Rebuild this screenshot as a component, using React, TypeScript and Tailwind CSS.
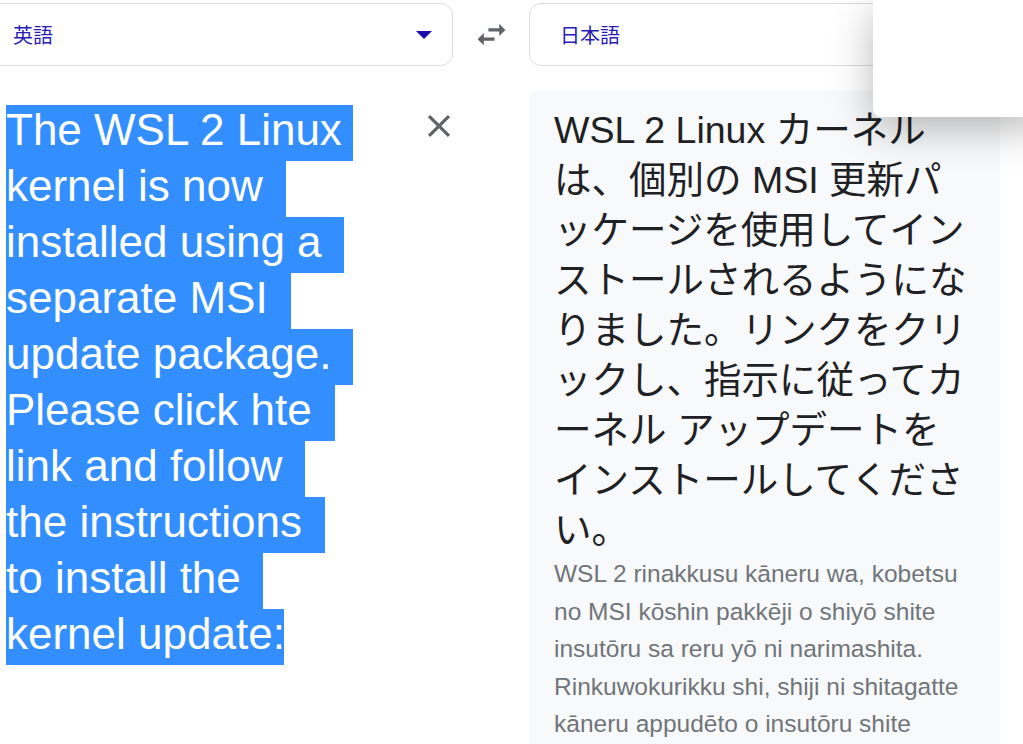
import React from "react";

const sourceLines = [
  { text: "The WSL 2 Linux", width: "w-[347px]" },
  { text: "kernel is now", width: "w-[280px]" },
  { text: "installed using a", width: "w-[338px]" },
  { text: "separate MSI", width: "w-[285px]" },
  { text: "update package.", width: "w-[347px]" },
  { text: "Please click hte", width: "w-[329px]" },
  { text: "link and follow", width: "w-[299px]" },
  { text: "the instructions", width: "w-[319px]" },
  { text: "to install the", width: "w-[257px]" },
  { text: "kernel update:", width: "w-[278px]" },
];

const translatedLines = [
  "WSL 2 Linux カーネル",
  "は、個別の MSI 更新パ",
  "ッケージを使用してイン",
  "ストールされるようにな",
  "りました。リンクをクリ",
  "ックし、指示に従ってカ",
  "ーネル アップデートを",
  "インストールしてくださ",
  "い。",
];

const romajiLines = [
  "WSL 2 rinakkusu kāneru wa, kobetsu",
  "no MSI kōshin pakkēji o shiyō shite",
  "insutōru sa reru yō ni narimashita.",
  "Rinkuwokurikku shi, shiji ni shitagatte",
  "kāneru appudēto o insutōru shite",
];

function SwapIcon() {
  return (
    <svg aria-hidden="true" viewBox="0 0 24 24" className="h-[37px] w-[37px] fill-[#5f6368]">
      <path d="M6.99 11L3 15l3.99 4v-3H14v-2H6.99v-3zM21 9l-3.99-4v3H10v2h7.01v3L21 9z" />
    </svg>
  );
}

function CloseIcon() {
  return (
    <svg aria-hidden="true" viewBox="0 0 24 24" className="h-[38px] w-[38px] fill-[#5f6368]">
      <path d="M19 6.41L17.59 5 12 10.59 6.41 5 5 6.41 10.59 12 5 17.59 6.41 19 12 13.41 17.59 19 19 17.59 13.41 12z" />
    </svg>
  );
}

export default function App() {
  return (
    <div className="relative h-[744px] w-[1023px] overflow-hidden bg-white font-['Liberation_Sans','Noto_Sans_CJK_JP',sans-serif]">
      {/* language pickers */}
      <div className="mt-[3px] flex h-[63px] items-stretch">
        <div className="-ml-[12px] flex w-[465px] shrink-0 items-center justify-between rounded-[12px] border border-[#dadce0] pl-[24px] pr-[20px]">
          <span className="font-['Noto_Sans_CJK_JP',sans-serif] text-[20px] text-[#2a1cb5]">英語</span>
          <span className="h-0 w-0 border-x-[8px] border-t-[8px] border-x-transparent border-t-[#1a0dab]" />
        </div>
        <div className="flex w-[76px] shrink-0 items-center justify-center">
          <SwapIcon />
        </div>
        <div className="flex w-[520px] shrink-0 items-center rounded-[12px] border border-[#dadce0] pl-[30px]">
          <span className="font-['Noto_Sans_CJK_JP',sans-serif] text-[20px] text-[#2a1cb5]">日本語</span>
        </div>
      </div>

      {/* panels */}
      <div className="mt-[24px] flex">
        <div className="flex w-[529px] shrink-0 pt-[15px]">
          <div className="w-[420px] pl-[6px]">
            {sourceLines.map((line) => (
              <div
                key={line.text}
                className={`${line.width} h-[56px] whitespace-nowrap bg-[#338fff] text-[44px] leading-[50px] text-white`}
              >
                {line.text}
              </div>
            ))}
          </div>
          <button className="mt-[2px] h-[38px] w-[38px]">
            <CloseIcon />
          </button>
        </div>

        <div className="h-[700px] w-[471px] shrink-0 rounded-tl-[10px] bg-[#f8f9fa] px-[25px] pt-[15px]">
          <div className="text-[37.5px] leading-[50px] text-[#202124]">
            {translatedLines.map((line) => (
              <div key={line} className="whitespace-nowrap">
                {line}
              </div>
            ))}
          </div>
          <div className="text-[24.5px] leading-[37.5px] text-[#70757a]">
            {romajiLines.map((line) => (
              <div key={line} className="whitespace-nowrap">
                {line}
              </div>
            ))}
          </div>
        </div>
      </div>

      {/* overlay popup */}
      <div className="absolute left-[873px] top-0 h-[117px] w-[170px] rounded-bl-[8px] bg-white shadow-[0_12px_40px_rgba(0,0,0,0.28)]" />
    </div>
  );
}
